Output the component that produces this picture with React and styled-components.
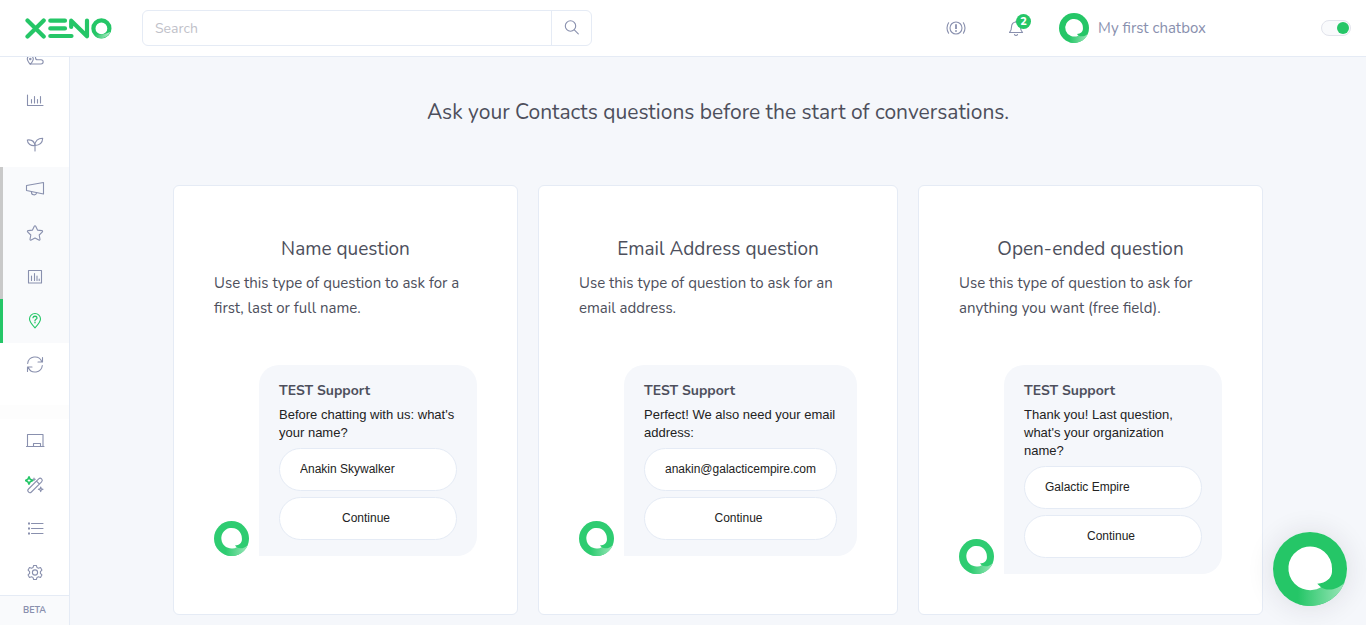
import React, { useState } from 'react';
import styled, { createGlobalStyle } from 'styled-components';

const colors = {
  green: '#25c667',
  lightGreen: '#2ecc71',
  border: '#e5ebf5',
  page: '#f5f7fb',
  soft: '#f9fafc',
  muted: '#8990ae',
  text: '#4d4f5c',
};

const topLinks = [
  { id: 'journey', label: 'Journeys' },
  { id: 'analytics', label: 'Analytics' },
  { id: 'growth', label: 'Growth' },
  { id: 'campaigns', label: 'Campaigns', group: true },
  { id: 'favorites', label: 'Satisfaction', group: true },
  { id: 'surveys', label: 'Surveys', group: true },
  { id: 'questions', label: 'Questions', group: true, active: true },
  { id: 'sync', label: 'Sync' },
];

const bottomLinks = [
  { id: 'board', label: 'Board' },
  { id: 'wand', label: 'Magic' },
  { id: 'list', label: 'Lists' },
  { id: 'settings', label: 'Settings' },
];

const questions = [
  {
    id: 'name',
    title: 'Name question',
    description: 'Use this type of question to ask for a first, last or full name.',
    message: "Before chatting with us: what's your name?",
    answer: 'Anakin Skywalker',
  },
  {
    id: 'email',
    title: 'Email Address question',
    description: 'Use this type of question to ask for an email address.',
    message: 'Perfect! We also need your email address:',
    answer: 'anakin@galacticempire.com',
  },
  {
    id: 'open',
    title: 'Open-ended question',
    description: 'Use this type of question to ask for anything you want (free field).',
    message: "Thank you! Last question, what's your organization name?",
    answer: 'Galactic Empire',
  },
];

// Icon shapes, all on a 20x20 grid
const shapes = {
  journey: (
    <>
      <path d="M5.300 17.400C3 14.500 2.300 13.200 2.300 12a3 3 0 0 1 6 0c0 1.200-.7 2.500-3 5.400Z" />
      <circle cx="5.300" cy="12" r=".7" />
      <path d="M6.500 17H16a2 2 0 0 0 0-4.300h-3.500a2 2 0 0 1 0-4H17" />
    </>
  ),
  analytics: (
    <>
      <path d="M2.500 4v10.500H18" />
      <path d="M6.500 8.500v3.500M9.500 5.500V12M12.500 8.500V12M15.500 5.500V12" />
    </>
  ),
  growth: (
    <>
      <path d="M10 16v-5.500C9.800 6 13 3.200 17.700 3.300 17.500 7.500 15 10.300 10 10.500" />
      <path d="M10 10.500C6 11 2.500 9 2.300 5 6.500 4.500 9.500 6.300 10 10.500Z" />
    </>
  ),
  campaigns: (
    <>
      <path d="M1.500 6.500 18.500 3.500V15L1.500 11.500Z" />
      <path d="M6.500 12.800a2.600 2.600 0 0 0 5.100 1" />
    </>
  ),
  favorites: (
    <path d="M9.300 3.200c.3-.6 1.100-.6 1.400 0l1.800 3.900 4.400.5c.7.1.9.8.5 1.300L14.200 12l.8 4.300c.1.600-.6 1.100-1.200.8L10 15l-3.800 2.100c-.6.3-1.300-.2-1.200-.8L5.800 12 2.600 8.900c-.4-.5-.2-1.200.5-1.300l4.400-.5Z" />
  ),
  surveys: (
    <>
      <rect x="3.500" y="3.500" width="13" height="12.500" />
      <path d="M6.500 9v4.500M9.500 6.500v7M12 9v4.500M14.200 12v1.500" />
    </>
  ),
  questions: (
    <>
      <path d="M10 16.900C6 12.500 4.500 10.700 4.500 8a5.500 5.500 0 0 1 11 0C15.500 10.700 14 12.500 10 16.900Z" />
      <path d="M8 6.700C8.200 4.700 12 4.800 12 6.900 12 8.300 10 8.300 10 9.600M10 11.200v.6" strokeWidth="1.300" />
    </>
  ),
  sync: (
    <>
      <path d="M2.700 8.500A7.300 7.300 0 0 1 16.700 6.500M17.500 2.500V7H13" />
      <path d="M17.300 10.500A7.300 7.300 0 0 1 3.300 12.500M2.500 16.500V12H7" />
    </>
  ),
  board: (
    <>
      <path d="M2.500 15.500V3.500h15.500v12M1.500 15.500h17.500" />
      <path d="M8.500 15.500v-3h7v3" />
    </>
  ),
  wand: (
    <>
      <path d="M3.500 14 13.700 3.900a2 2 0 0 1 2.900 2.900L6.400 17a2 2 0 0 1-2.900-3ZM11.500 6.100l2.900 2.900" />
      <path d="m15.700 12 .6 1.700 1.700.600-1.700.6-.6 1.700-.6-1.700-1.700-.6 1.700-.6ZM9 3v2.600M7.800 4.300h2.500" />
      <path
        d="M4 1.800 5.200 4.300 7.700 5.500 5.200 6.700 4 9.200 2.800 6.700.5 5.500 2.800 4.300Z"
        stroke={colors.green}
        strokeWidth="1.600"
      />
    </>
  ),
  list: (
    <>
      <path d="M6.500 4.500H18M6.500 9.500H18M6.500 14.500H18" />
      <path d="M3 4.500h2M3 9.500h2M3 14.500h2" strokeWidth="2" strokeLinecap="butt" />
    </>
  ),
  settings: (
    <>
      <circle cx="10" cy="9.500" r="2.600" />
      <path d="M8.600 2.500h2.800l.5 1.900 1.500.9 2.100-.7 1.400 2.500-1.500 1.500v1.800l1.500 1.500-1.400 2.500-2.100-.7-1.500.9-.5 1.900H8.600l-.5-1.900-1.500-.9-2.100.7-1.400-2.500 1.500-1.500V8.600L3.100 7.100l1.400-2.500 2.100.7 1.500-.9Z" />
    </>
  ),
  search: (
    <>
      <circle cx="8.500" cy="8" r="5.200" />
      <path d="m12.300 11.800 4 4" />
    </>
  ),
  alert: (
    <>
      <circle cx="10" cy="10" r="6" />
      <path d="M10 6.300v4.700M10 12.200v1.600" strokeWidth="1.800" strokeLinecap="butt" />
      <path d="M2.600 4.800Q-.6 10 2.600 15.200M17.400 4.800Q20.600 10 17.400 15.200" />
    </>
  ),
  bell: (
    <>
      <path d="M3.500 14.500c1.500-1.300 2-2.500 2-5.500 0-3 1.700-5 4.500-5s4.500 2 4.500 5c0 3 .5 4.200 2 5.500Z" />
      <path d="M10 4V3M8.500 16.500a1.600 1.600 0 0 0 3 0" />
    </>
  ),
};

const Icon = ({ name }) => <IconSvg viewBox="0 0 20 20" aria-hidden="true">{shapes[name]}</IconSvg>;

const Mark = ({ id, size, color = colors.green }) => (
  <MarkSvg $size={size} viewBox="0 0 74 74" aria-hidden="true">
    <defs>
      <linearGradient id={`fade-${id}`} x1="25" y1="0" x2="72" y2="0" gradientUnits="userSpaceOnUse">
        <stop offset="0" stopColor={color} />
        <stop offset="1" stopColor="#9be6b9" />
      </linearGradient>
    </defs>
    <circle cx="37" cy="37" r="37" fill={color} />
    <path d="M25 54 48 55.300C54 59.500 65 58 71.500 50.500A37 37 0 0 1 25 72Z" fill={`url(#fade-${id})`} />
    <path d="M48 55.300A21.800 21.800 0 1 1 59 36.500V40C58.500 46 53.500 51 44.300 51.700Z" fill="#fff" />
  </MarkSvg>
);

const Logo = () => (
  <LogoSvg viewBox="0 0 87 21" role="img" aria-label="Xeno">
    <defs>
      <linearGradient id="logo-fade" x1="70" y1="0" x2="85" y2="0" gradientUnits="userSpaceOnUse">
        <stop offset="0" stopColor={colors.green} />
        <stop offset="1" stopColor="#b5ecca" />
      </linearGradient>
    </defs>
    <g fill="none" stroke={colors.green} strokeWidth="4.200" strokeLinecap="round" strokeLinejoin="round">
      <path d="M2.500 2.500 18.700 18.500M18.700 2.500 2.500 18.500" />
      <path d="M25.300 2.700H40M25.300 10.400H40M25.300 18H46.500" />
      <path d="M46.200 9V2.700L62 18.300V2.500" />
      <circle cx="76.400" cy="10.400" r="8" />
    </g>
    <path d="M70 16.500C76 17 81 16 85.200 14A10.200 10.200 0 0 1 70.500 18.700Z" fill="url(#logo-fade)" />
  </LogoSvg>
);

const SideLink = ({ link }) => (
  <NavItem href={`#${link.id}`} aria-label={link.label} $group={link.group} $active={link.active}>
    <Icon name={link.id} />
  </NavItem>
);

const QuestionCard = ({ question }) => {
  const [answer, setAnswer] = useState(question.answer);
  const fieldId = `answer-${question.id}`;

  return (
    <Card>
      <CardTitle>{question.title}</CardTitle>
      <CardText>{question.description}</CardText>
      <Preview>
        <Mark id={question.id} size={35} color={colors.lightGreen} />
        <Bubble>
          <Sender>TEST Support</Sender>
          <Message htmlFor={fieldId}>{question.message}</Message>
          <Answer id={fieldId} value={answer} onChange={(e) => setAnswer(e.target.value)} />
          <Continue type="button">Continue</Continue>
        </Bubble>
      </Preview>
    </Card>
  );
};

const App = () => {
  const [online, setOnline] = useState(true);

  return (
    <Page>
      <GlobalStyle />
      <Header>
        <Logo />
        <SearchForm role="search" onSubmit={(e) => e.preventDefault()}>
          <SearchInput type="text" placeholder="Search" aria-label="Search" />
          <SearchButton type="submit" aria-label="Submit search">
            <Icon name="search" />
          </SearchButton>
        </SearchForm>
        <HeaderActions>
          <HeaderIcons>
            <IconButton type="button" aria-label="Status">
              <Icon name="alert" />
            </IconButton>
            <IconButton type="button" aria-label="Notifications">
              <Icon name="bell" />
              <Badge>2</Badge>
            </IconButton>
          </HeaderIcons>
          <Account type="button">
            <Mark id="account" size={30} />
            My first chatbox
          </Account>
        </HeaderActions>
        <Toggle
          type="checkbox"
          aria-label="Online"
          checked={online}
          onChange={(e) => setOnline(e.target.checked)}
        />
      </Header>
      <Body>
        <Sidebar>
          <NavTop>
            {topLinks.map((link) => (
              <SideLink key={link.id} link={link} />
            ))}
          </NavTop>
          <NavFade />
          {bottomLinks.map((link) => (
            <SideLink key={link.id} link={link} />
          ))}
          <Beta>BETA</Beta>
        </Sidebar>
        <Main>
          <Heading>Ask your Contacts questions before the start of conversations.</Heading>
          <Cards>
            {questions.map((question) => (
              <QuestionCard key={question.id} question={question} />
            ))}
          </Cards>
        </Main>
      </Body>
      <ChatLauncher type="button" aria-label="Open chat">
        <Mark id="launcher" size={74} />
      </ChatLauncher>
    </Page>
  );
};

// Styled Components
const GlobalStyle = createGlobalStyle`
  *, *::before, *::after {
    box-sizing: border-box;
  }

  body {
    margin: 0;
    background: ${colors.page};
    color: ${colors.text};
    font-family: Nunito, Lato, sans-serif;
    font-size: 15px;
  }

  button, input {
    margin: 0;
    font-family: inherit;
  }

  button {
    cursor: pointer;
  }
`;

const Page = styled.div`
  display: flex;
  flex-direction: column;
  height: 100vh;
`;

const Header = styled.header`
  display: flex;
  flex-shrink: 0;
  align-items: center;
  height: 57px;
  padding: 0 15px 0 25px;
  background: #fff;
  border-bottom: 1px solid ${colors.border};
`;

const LogoSvg = styled.svg`
  flex-shrink: 0;
  width: 87px;
  height: 21px;
`;

const IconSvg = styled.svg`
  display: block;
  width: 20px;
  height: 20px;
  fill: none;
  stroke: currentColor;
  stroke-width: 1.1;
  stroke-linecap: round;
  stroke-linejoin: round;
`;

const MarkSvg = styled.svg`
  display: block;
  flex-shrink: 0;
  width: ${({ $size }) => $size}px;
  height: ${({ $size }) => $size}px;
`;

const SearchForm = styled.form`
  display: flex;
  width: 450px;
  height: 36px;
  margin-left: 30px;
  border: 1px solid ${colors.border};
  border-radius: 6px;
`;

const SearchInput = styled.input`
  flex: 1;
  min-width: 0;
  padding: 0 12px;
  border: none;
  background: none;
  color: ${colors.text};
  font-size: 14px;
  outline: none;

  &::placeholder {
    color: #bfc1c9;
  }
`;

const SearchButton = styled.button`
  display: flex;
  align-items: center;
  justify-content: center;
  width: 40px;
  padding: 0;
  border: none;
  border-left: 1px solid ${colors.border};
  background: none;
  color: ${colors.muted};
`;

const HeaderActions = styled.div`
  display: flex;
  align-items: center;
  gap: 33px;
  margin-left: auto;
  margin-right: 115px;
`;

const HeaderIcons = styled.div`
  display: flex;
  align-items: center;
  gap: 40px;
`;

const IconButton = styled.button`
  position: relative;
  padding: 0;
  border: none;
  background: none;
  color: ${colors.muted};
`;

const Badge = styled.span`
  position: absolute;
  top: -4px;
  right: -5px;
  width: 15px;
  height: 15px;
  border-radius: 50%;
  background: ${colors.green};
  color: #fff;
  font-size: 11px;
  font-weight: 800;
  line-height: 15px;
  text-align: center;
`;

const Account = styled.button`
  display: flex;
  align-items: center;
  gap: 9px;
  padding: 0;
  border: none;
  background: none;
  color: ${colors.muted};
  font-size: 15px;
  white-space: nowrap;
`;

const Toggle = styled.input`
  appearance: none;
  display: flex;
  align-items: center;
  flex-shrink: 0;
  width: 30px;
  height: 16px;
  padding: 0 1px;
  border: 1px solid #e2e4ec;
  border-radius: 8px;
  background: ${colors.soft};
  cursor: pointer;

  &::before {
    content: '';
    width: 12px;
    height: 12px;
    border-radius: 50%;
    background: #c4c7d2;
  }

  &:checked::before {
    margin-left: auto;
    background: ${colors.green};
  }
`;

const Body = styled.div`
  display: flex;
  flex: 1;
  min-height: 0;
`;

const Sidebar = styled.nav`
  display: flex;
  flex-direction: column;
  flex-shrink: 0;
  width: 70px;
  background: #fff;
  border-right: 1px solid ${colors.border};
`;

const NavTop = styled.div`
  display: flex;
  flex: 1;
  flex-direction: column;
  justify-content: flex-end;
  min-height: 0;
  padding-bottom: 18px;
  overflow: hidden;
`;

const NavItem = styled.a`
  display: flex;
  flex-shrink: 0;
  align-items: center;
  justify-content: center;
  height: 44px;
  background: ${({ $group }) => ($group ? colors.soft : 'transparent')};
  box-shadow: ${({ $group, $active }) =>
    $group ? `inset 3px 0 ${$active ? colors.green : '#c9c9c9'}` : 'none'};
  color: ${({ $active }) => ($active ? colors.green : colors.muted)};
`;

const NavFade = styled.div`
  flex-shrink: 0;
  height: 14px;
  background: #fdfdfd;
`;

const Beta = styled.div`
  flex-shrink: 0;
  height: 30px;
  border-top: 1px solid ${colors.border};
  background: ${colors.soft};
  color: ${colors.muted};
  font-size: 9px;
  font-weight: 700;
  line-height: 28px;
  text-align: center;
`;

const Main = styled.main`
  flex: 1;
  min-width: 0;
  padding: 40px 20px 10px;
  overflow: auto;
`;

const Heading = styled.h1`
  margin: 0 0 58px;
  font-size: 21px;
  font-weight: 400;
  line-height: 30px;
  text-align: center;
`;

const Cards = styled.div`
  display: grid;
  grid-template-columns: 23fr 24fr 23fr;
  gap: 20px;
  max-width: 1090px;
  margin: 0 auto;
`;

const Card = styled.section`
  padding: 48px 40px 40px;
  border: 1px solid ${colors.border};
  border-radius: 6px;
  background: #fff;
`;

const CardTitle = styled.h2`
  margin: 0 0 7px;
  font-size: 19px;
  font-weight: 400;
  line-height: 30px;
  text-align: center;
`;

const CardText = styled.p`
  margin: 0 0 44px;
  font-size: 15px;
  line-height: 25px;
`;

const Preview = styled.div`
  display: flex;
  align-items: flex-end;
  gap: 10px;
`;

const Bubble = styled.div`
  display: flex;
  flex: 1;
  flex-direction: column;
  min-width: 0;
  padding: 16px 20px;
  border-radius: 20px 20px 20px 0;
  background: ${colors.page};
`;

const Sender = styled.strong`
  margin-bottom: 5px;
  font-size: 14px;
  font-weight: 700;
  line-height: 20px;
`;

const Message = styled.label`
  margin-bottom: 6px;
  color: #222;
  font-family: 'Liberation Sans', Arial, sans-serif;
  font-size: 13px;
  line-height: 18px;
`;

const Answer = styled.input`
  width: 100%;
  height: 43px;
  margin-bottom: 6px;
  padding: 0 20px 2px;
  border: 1px solid ${colors.border};
  border-radius: 22px;
  background: #fff;
  color: #222;
  font-family: 'Liberation Sans', Arial, sans-serif;
  font-size: 12px;
  outline: none;
`;

const Continue = styled.button`
  height: 43px;
  padding: 0 24px 2px 20px;
  border: 1px solid ${colors.border};
  border-radius: 22px;
  background: #fff;
  color: #222;
  font-family: 'Liberation Sans', Arial, sans-serif;
  font-size: 12px;
`;

const ChatLauncher = styled.button`
  position: fixed;
  right: 19px;
  bottom: 19px;
  padding: 0;
  border: none;
  border-radius: 50%;
  background: none;
  box-shadow: 0 1px 28px rgba(40, 30, 50, 0.12);
`;

export default App;
